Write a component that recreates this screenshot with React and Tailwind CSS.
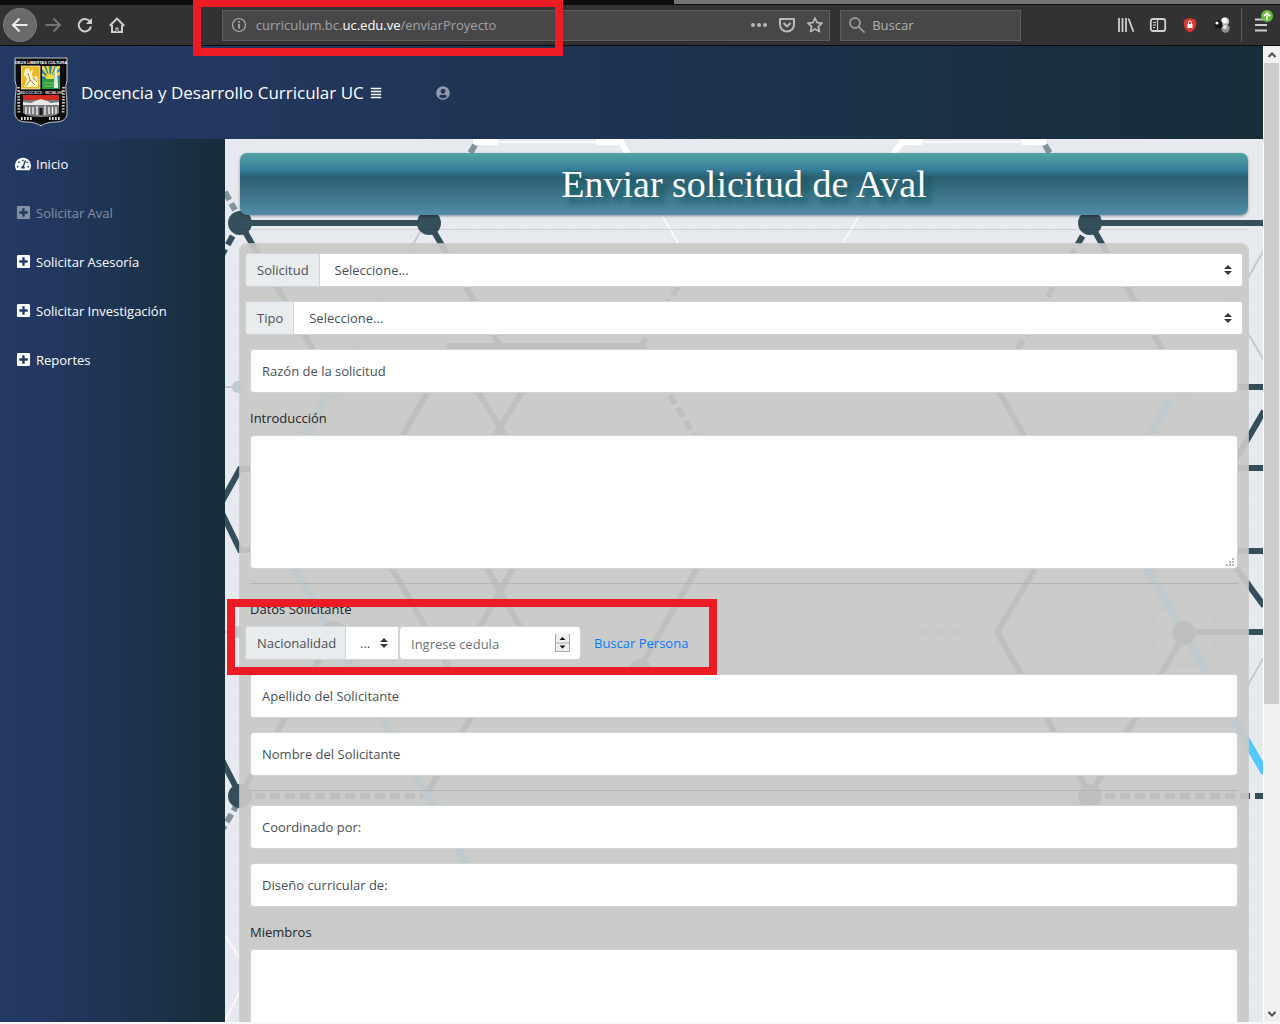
import React from "react";
import {
  FaAlignJustify,
  FaPlusSquare,
  FaTachometerAlt,
  FaUserCircle,
} from "react-icons/fa";

function Crest() {
  return (
    <svg viewBox="0 0 54 70" className="mb-[2px] h-[70px] w-[54px] shrink-0" role="img" aria-label="Escudo UC">
      <path d="M1 1H53V24Q51 28 52 34Q53 40 53 50V58Q51 65 42 65Q32 65 27 69Q22 65 12 65Q3 65 1 58V50Q1 40 2 34Q3 28 1 24Z" fill="#0b0b0c" stroke="#c4c6c8" />
      <text x="27" y="7" textAnchor="middle" fontFamily="Liberation Sans" fontWeight="bold" fontSize="4" fill="#fff">DEUS LIBERTAS CULTURA</text>
      <rect x="7.500" y="9" width="18.500" height="23" fill="#efb91d" stroke="#f5f5f5" strokeWidth=".7" />
      <path d="M11 12l4-1 1 4 3-3-1 5 1 5 3 8h-12l3-8-3-4zM20 20l3-1 1 5v6h-4z" fill="#fff6cf" />
      <path d="M14 16l2 7-4 6M16 23l5 5M20 21l3 4" stroke="#8b6a18" strokeWidth=".8" fill="none" />
      <rect x="28" y="9" width="18" height="23" fill="#2382b5" />
      <path d="M36 22L28 12V9h2zM36 22L32 9h3zM36 22L38 9h3zM36 22L43 9h3v2zM36 22L28 16v3zM36 22L46 14v4z" fill="#f0d334" />
      <circle cx="36" cy="21" r="4" fill="#f3d93b" />
      <path d="M28 22h18v10h-18z" fill="#2b9d47" />
      <path d="M29 26h14M30 29h13" stroke="#8ac64a" />
      <path d="M40 31v-3l1-16 1-3 1 3 1 16v3z" fill="#e7e9e9" />
      <text x="27" y="36.500" textAnchor="middle" fontFamily="Liberation Sans" fontWeight="bold" fontSize="4" fill="#ddd">MDCCCXCII · MCMLVIII</text>
      <rect x="9" y="38" width="36" height="5" fill="#d42a22" />
      <path d="M9 43h36v13q-4 4-18 4t-18-4z" fill="#77797c" />
      <path d="M9 45l8 1 4-2 6-2 6 2 4 2 8-1v3h-36z" fill="#e8e8e8" />
      <path d="M12 50v7M15.500 50v7M19 50v7M35 50v7M38.500 50v7M42 50v7M23 49v9M31 49v9" stroke="#f4f4f4" strokeWidth="1.300" />
      <path d="M27 58v-7" stroke="#1d1d1d" strokeWidth="3" />
      <path d="M4.500 30q0 15 .5 27M49.500 30q0 15-.5 27" stroke="#c9c9c9" strokeWidth="2.800" strokeDasharray="1.500 1.500" fill="none" />
      <path d="M7 61.500h12M35 61.500h12" stroke="#dcdcdc" strokeWidth="2.800" strokeDasharray="1.700 1.300" />
    </svg>
  );
}

function ToolIcon({ children, label, className = "" }) {
  return (
    <button type="button" aria-label={label} className={"flex h-8 w-8 shrink-0 items-center justify-center " + className}>
      <svg viewBox="0 0 16 16" className="h-4 w-4 overflow-visible" fill="none" stroke="#d0d0d1" strokeWidth="2">
        {children}
      </svg>
    </button>
  );
}

function BrowserBar() {
  return (
    <div className="shrink-0 bg-[#0c0c0d]">
      <div className="flex h-[5px] pb-px">
        <div className="flex-[674]" />
        <div className="flex-[606] bg-[#737373]" />
      </div>
      <div className="flex h-10 items-center bg-[#323234]">
        <div className="flex shrink-0 pl-1">
          <ToolIcon label="Atrás" className="rounded-full bg-[#6a6a6b] ring-1 ring-[#7a7a7a]">
            <path d="M15.500 8H1.500M7.500 1.500L1 8l6.500 6.500" stroke="#ececec" />
          </ToolIcon>
          <ToolIcon label="Adelante" className="ml-px">
            <path d="M.5 8H14.500M8.500 1.500L15 8l-6.500 6.500" stroke="#757576" />
          </ToolIcon>
          <ToolIcon label="Recargar">
            <path d="M13.500 5.500A6.200 6.200 0 1 0 14 9.500" />
            <path d="M15 1v6H9z" fill="#d0d0d1" stroke="none" />
          </ToolIcon>
          <ToolIcon label="Inicio del navegador">
            <path d="M.8 8.800L8 1.600l7.200 7.200M3 8v7h10V8" />
            <path d="M8 15v-4.500" strokeWidth="3" />
            <path d="M8 15v-3.500" strokeWidth="1" stroke="#323234" />
          </ToolIcon>
        </div>
        <div className="flex-[90]" />
        <div className="relative flex h-[31px] min-w-0 flex-[606] items-center border border-[#5d5d5f] bg-[#474749] pl-2 pr-0">
          <svg viewBox="0 0 16 16" className="h-4 w-4 shrink-0" fill="none" stroke="#b1b1b3">
            <circle cx="8" cy="8" r="6.500" strokeWidth="1.200" />
            <path d="M8 7v4.500M8 4v1.700" strokeWidth="1.700" />
          </svg>
          <div role="textbox" aria-label="Dirección" tabIndex={0} className="ml-[9px] flex-1 truncate pt-[2px] text-[13px] text-[#a3a3a5]">
            curriculum.bc.<span className="text-white">uc.edu.ve</span>/enviarProyecto
          </div>
          <button type="button" aria-label="Acciones" className="flex w-7 justify-center">
            <svg viewBox="0 0 16 16" className="h-4 w-4" fill="#b9b9ba">
              <circle cx="2" cy="8" r="2" /><circle cx="8" cy="8" r="2" /><circle cx="14" cy="8" r="2" />
            </svg>
          </button>
          <button type="button" aria-label="Pocket" className="flex w-7 justify-center">
            <svg viewBox="0 0 16 16" className="h-4 w-4" fill="none" stroke="#b9b9ba" strokeWidth="2" strokeLinejoin="round">
              <path d="M1 2h14v5.500a7 7 0 0 1-14 0zM4.500 6L8 9.500 11.500 6" />
            </svg>
          </button>
          <button type="button" aria-label="Marcador" className="flex w-7 justify-center">
            <svg viewBox="0 0 16 16" className="h-4 w-4" fill="none" stroke="#b9b9ba" strokeWidth="1.700" strokeLinejoin="round">
              <path d="M8 1l2.100 4.600 5 .6-3.700 3.400 1 5L8 12.100l-4.400 2.500 1-5L.9 6.200l5-.6z" />
            </svg>
          </button>
          <div className="pointer-events-none absolute -left-[30px] -top-3 z-20 h-[57px] w-[370px] border-8 border-[#ed1c24]" />
        </div>
        <label className="ml-[10px] flex h-[31px] w-[181px] shrink-0 items-center gap-[7px] border border-[#5d5d5f] bg-[#474749] pl-2">
          <svg viewBox="0 0 16 16" className="h-4 w-4 shrink-0" fill="none" stroke="#99999a" strokeWidth="1.800">
            <circle cx="6" cy="6" r="5" /><path d="M9.600 9.600l6 6" />
          </svg>
          <input aria-label="Buscar" placeholder="Buscar" className="w-full min-w-0 bg-transparent pt-[2px] text-[13px] outline-none placeholder:text-[#b1b1b3]" />
        </label>
        <div className="flex-[90]" />
        <div className="flex shrink-0 items-center">
          <ToolIcon label="Biblioteca">
            <path d="M1 1v14M4.500 1v14M8 1v14M10.500 1.500l5 13.300" strokeWidth="1.800" />
          </ToolIcon>
          <ToolIcon label="Barra lateral">
            <rect x=".8" y="2" width="14.400" height="12" rx="2" strokeWidth="1.800" />
            <path d="M7.500 2v12M3 5.500h3M3 8h3M3 10.500h2" strokeWidth="1.200" />
          </ToolIcon>
          <ToolIcon label="Seguridad">
            <path d="M8 1l6 2v5q0 4-6 7.500Q2 12 2 8V3z" fill="#df3b2e" stroke="#a32b22" strokeWidth=".7" />
            <rect x="5.500" y="7" width="5" height="4" fill="#fff" stroke="none" />
            <path d="M6.500 7V5.500a1.500 1.500 0 0 1 3 0V7" stroke="#fff" strokeWidth="1" />
          </ToolIcon>
          <ToolIcon label="Extensión">
            <g stroke="none">
              <circle cx="11" cy="4.500" r="4.200" fill="#c9c9c9" /><circle cx="10.500" cy="3.500" r="2.500" fill="#fff" />
              <circle cx="11.500" cy="11.500" r="4.200" fill="#8f8f90" /><circle cx="11" cy="10" r="2.200" fill="#dcdcdc" />
              <circle cx="4.500" cy="7.500" r="4" fill="#161617" /><circle cx="3" cy="6" r="1.600" fill="#f4f4f4" />
            </g>
          </ToolIcon>
          <div className="ml-[3px] h-[34px] w-px bg-[#5d5d5f]" />
          <ToolIcon label="Menú" className="ml-[6px]">
            <path d="M-1 2.500h12M-1 8h12M-1 13.500h12" strokeWidth="1.800" />
            <circle cx="11" cy="-1" r="6" fill="#6cbb3c" stroke="none" />
            <path d="M11 3v-7M8 -1l3-3 3 3" stroke="#fff" strokeWidth="1.600" />
          </ToolIcon>
        </div>
      </div>
      <div className="h-px" />
    </div>
  );
}

/* Decorative hexagonal mesh behind the form */
function Mesh() {
  return (
    <svg aria-hidden="true" viewBox="225 139 1038 883" preserveAspectRatio="xMinYMin slice" className="absolute inset-0 h-full w-full" fill="none">
      <defs>
        <pattern id="grain" width="3" height="3" patternUnits="userSpaceOnUse">
          <rect width="3" height="3" fill="#e7eaef" /><rect width="1" height="1" fill="#e1e5ea" />
        </pattern>
      </defs>
      <rect x="225" y="139" width="1038" height="883" fill="url(#grain)" />
      <g stroke="#fff" strokeWidth="6">
        <path d="M473 142h25M596 142h25l8 14M890 158l12-16h20M1022 142h24" />
        <path d="M498 142h98M922 142h100M661 214l20 34M860 214l-20 34M225 935l15 24M240 991l-15 30" strokeWidth="2" strokeOpacity=".7" />
      </g>
      <g stroke="#80939b" strokeWidth="6" strokeDasharray="9 4">
        <path d="M475 145l-10 17M1045 145l10 17M225 192l10 18M238 803l-16 27" />
      </g>
      <g stroke="#c1cbcf" strokeWidth="2">
        <path d="M1264 250l-75 130M1220 287l45 75M1264 657l-40 70M225 387h12M425 223l-90 160M225 632h12M997 632h187M1078 632l50-90M1078 632l40 70M1085 392l40 70" />
        <circle cx="1184" cy="633" r="33" strokeWidth="4" />
        <circle cx="1184" cy="385" r="12" fill="#e5e9ee" strokeWidth="5" />
        <circle cx="334" cy="387" r="12" fill="#e5e9ee" strokeWidth="5" />
        <path d="M500 427h90M500 591h95" />
      </g>
      <g fill="#c1cbcf">
        <circle cx="238" cy="387" r="6" /><circle cx="238" cy="632" r="6" /><circle cx="1091" cy="632" r="6" /><circle cx="594" cy="427" r="6" />
      </g>
      <g stroke="#344f5b" strokeWidth="6">
        <path d="M240 223h189M240 223l90 156M429 223l70 121M1090 223h175M1090 223l89 156M1184 387h80" />
        <path d="M447 346h200M427 393l-80 140M474 386l26 41 26-41M500 427l-10 17M500 427l10 17" />
        <path d="M252 469h-12l-21 38 21 43h12M998 390l60 105M1035 569l-38 63 93 163 94-160" />
        <path d="M1264 411l-42 72M1220 468h44M1220 551h44M1220 546l44 60M1184 632h80M222 760l18 35 94-160M390 565l60 105M485 565l38 67M515 565l-38 67M640 668l60-105M475 710l-50 87" />
      </g>
      <g stroke="#344f5b" strokeWidth="6" strokeDasharray="10 5">
        <path d="M240 223l-18 32M1090 223l-82 143M670 395l30 50M678 287l-50 80M240 796h185M1090 796h174" />
      </g>
      <path d="M905 632h90" stroke="#c1cbcf" strokeWidth="6" strokeDasharray="10 5" />
      <path d="M1170 400l-50 85M1135 548l130 225M325 400l-45 80M290 561l180 308" stroke="#54c8ff" strokeWidth="8" />
      <g fill="#344f5b">
        <circle cx="240" cy="223" r="12" /><circle cx="429" cy="223" r="12" /><circle cx="1090" cy="223" r="12" />
        <circle cx="240" cy="796" r="12" /><circle cx="1090" cy="796" r="12" /><circle cx="1184" cy="633" r="12" />
        <circle cx="334" cy="633" r="12" /><circle cx="640" cy="671" r="12" />
      </g>
    </svg>
  );
}

function SortArrows({ className }) {
  return (
    <svg viewBox="0 0 8 10" className={"pointer-events-none absolute top-1/2 h-[10px] w-2 -translate-y-1/2 " + className} fill="#343a40">
      <path d="M4 0l4 4H0zM4 10L0 6h8z" />
    </svg>
  );
}

function SelectGroup({ id, label, text }) {
  return (
    <div className="flex h-[34px] px-[5px]">
      <label htmlFor={id} className="flex items-center rounded-l-[3px] border border-[#ced4da] bg-[#e9ecef] pl-[11px] pr-[10px] pt-[2px] text-[#495057]">{label}</label>
      <div className="relative flex-1">
        <select id={id} className="h-full w-full appearance-none rounded-r-[3px] border border-l-0 border-[#ced4da] bg-white px-[15px] pt-[2px] text-[#495057]">
          <option>{text}</option>
        </select>
        <SortArrows className="right-[11px]" />
      </div>
    </div>
  );
}

function TextField({ label }) {
  return (
    <div className="px-[10px]">
      <input aria-label={label} placeholder={label} className="block h-11 w-full rounded-[4px] border border-[#ced4da] bg-white px-[11px] placeholder:text-[#495057]" />
    </div>
  );
}

function AreaField({ id, label }) {
  return (
    <div className="flex flex-col gap-[7px] px-[10px]">
      <label htmlFor={id} className="h-[21px] leading-[23px]">{label}</label>
      <div className="relative">
        <textarea id={id} className="block h-[134px] w-full resize-none rounded-[4px] border border-[#ced4da] bg-white p-3" />
        <svg viewBox="0 0 8 8" className="pointer-events-none absolute bottom-[3px] right-1 h-2 w-2" fill="#b8b8b8">
          <path d="M6 0h2v2H6zM3 3h2v2H3zM6 3h2v2H6zM0 6h2v2H0zM3 6h2v2H3zM6 6h2v2H6z" />
        </svg>
      </div>
    </div>
  );
}

function Rule() {
  return <hr className="mx-[10px] border-0 border-t border-[#b3b4b5]" />;
}

const menu = [
  { text: "Inicio", home: true },
  { text: "Solicitar Aval", muted: true },
  { text: "Solicitar Asesoría" },
  { text: "Solicitar Investigación" },
  { text: "Reportes" },
];

function Sidebar() {
  return (
    <nav className="w-[225px] shrink-0 bg-[linear-gradient(to_right,#223a64,#23375e_25%,#1c3450_55%,#172d3a)]">
      {menu.map((item) => (
        <a key={item.text} href="#" className={"flex h-[49px] items-center gap-[5px] pl-[15px] " + (item.muted ? "text-[#8590a2]" : "text-white")}>
          <span className="flex w-4 justify-center">
            {item.home ? <FaTachometerAlt className="h-4 w-4" /> : <FaPlusSquare className="h-[15px] w-[15px]" />}
          </span>
          <span className="pt-[2px]">{item.text}</span>
        </a>
      ))}
    </nav>
  );
}

function Scrollbar() {
  return (
    <div aria-hidden="true" className="flex w-[17px] shrink-0 flex-col border-l border-white bg-[#f0f0f0]">
      <div className="flex h-[17px] shrink-0 items-center justify-center">
        <svg viewBox="0 0 8 6" className="h-[6px] w-2" fill="none" stroke="#505050" strokeWidth="2"><path d="M.5 5L4 1.500 7.500 5" /></svg>
      </div>
      <div className="mr-px flex-[641] bg-[#cdcdcd]" />
      <div className="flex-[301]" />
      <div className="flex h-[17px] shrink-0 items-center justify-center">
        <svg viewBox="0 0 8 6" className="h-[6px] w-2" fill="none" stroke="#505050" strokeWidth="2"><path d="M.5 1L4 4.500 7.500 1" /></svg>
      </div>
    </div>
  );
}

export default function App() {
  return (
    <div className="flex h-screen flex-col overflow-hidden bg-[#f8f8f8] pb-[2px] font-['Open_Sans',sans-serif] text-[13px] text-[#212529]">
      <BrowserBar />
      <div className="flex min-h-0 flex-1">
        <div className="flex min-w-0 flex-1 flex-col">
          <header className="flex h-[93px] shrink-0 items-center bg-[linear-gradient(to_right,#223a64,#23375e_20%,#1c3450_50%,#172d3a)] pl-[14px] text-white">
            <Crest />
            <a href="#" className="ml-[13px] text-[17px]">Docencia y Desarrollo Curricular UC</a>
            <button type="button" aria-label="Alternar menú" className="ml-[6px]"><FaAlignJustify className="h-3 w-3" /></button>
            <button type="button" aria-label="Usuario" className="ml-[54px] text-[#929bae]"><FaUserCircle className="h-[14px] w-[14px]" /></button>
          </header>
          <div className="flex min-h-0 flex-1">
            <Sidebar />
            <main className="relative min-w-0 flex-1 overflow-hidden">
              <Mesh />
              <div className="relative px-[15px] pt-[14px]">
                <h1 className="flex h-[62px] items-center justify-center rounded-[7px] bg-[linear-gradient(to_bottom,#52a4a4,#367d9a_27%,#2b6071_39%,#528ca9)] font-['Liberation_Serif',serif] text-[38px] text-white shadow-[0_1px_3px_rgba(0,0,0,0.4)] [text-shadow:6px_6px_6px_rgba(0,80,80,0.8)]">
                  Enviar solicitud de Aval
                </h1>
                <hr className="my-[14px] border-0 border-t border-black/10" />
                <form className="flex flex-col gap-[14px] rounded-[7px] bg-[rgba(200,201,199,0.93)] pt-[9px] shadow-[0_0_0_1px_rgba(200,201,199,0.8)]">
                  <SelectGroup id="solicitud" label="Solicitud" text="Seleccione..." />
                  <SelectGroup id="tipo" label="Tipo" text="Seleccione..." />
                  <TextField label="Razón de la solicitud" />
                  <AreaField id="introduccion" label="Introducción" />
                  <Rule />
                  <div className="relative flex flex-col gap-[7px]">
                    <h2 className="h-[21px] px-[10px] leading-[23px]">Datos Solicitante</h2>
                    <div className="flex h-[34px] px-[5px]">
                      <label htmlFor="nacionalidad" className="flex w-[101px] items-center rounded-l-[3px] border border-[#ced4da] bg-[#e9ecef] pl-[11px] pt-[2px] text-[#495057]">Nacionalidad</label>
                      <div className="relative w-[53px]">
                        <select id="nacionalidad" className="h-full w-full appearance-none border border-l-0 border-[#ced4da] bg-white pl-[14px] pt-[2px] text-[#495057]">
                          <option>...</option>
                        </select>
                        <SortArrows className="right-[11px]" />
                      </div>
                      <div className="relative w-[182px]">
                        <input type="number" aria-label="Ingrese cedula" placeholder="Ingrese cedula" className="h-full w-full rounded-[4px] border border-[#ced4da] bg-white px-[11px] pt-[2px] [appearance:textfield] placeholder:text-[#6c757d]" />
                        <svg viewBox="0 0 15 18" className="pointer-events-none absolute right-[11px] top-2 h-[18px] w-[15px]">
                          <path d="M.5 0v17.500h14V0M.5 9h14" fill="#f0f0f0" stroke="#a5a5a5" />
                          <path d="M7.500 3L10.500 6h-6zM7.500 14.500l3-3h-6z" fill="#111" />
                        </svg>
                      </div>
                      <button type="button" className="ml-[13px] pt-[2px] text-[#007bff]">Buscar Persona</button>
                    </div>
                    <div className="pointer-events-none absolute -bottom-[15px] -left-[13px] top-px z-20 w-[490px] border-8 border-[#ed1c24]" />
                  </div>
                  <TextField label="Apellido del Solicitante" />
                  <TextField label="Nombre del Solicitante" />
                  <Rule />
                  <TextField label="Coordinado por:" />
                  <TextField label="Diseño curricular de:" />
                  <AreaField id="miembros" label="Miembros" />
                </form>
              </div>
            </main>
          </div>
        </div>
        <Scrollbar />
      </div>
    </div>
  );
}
